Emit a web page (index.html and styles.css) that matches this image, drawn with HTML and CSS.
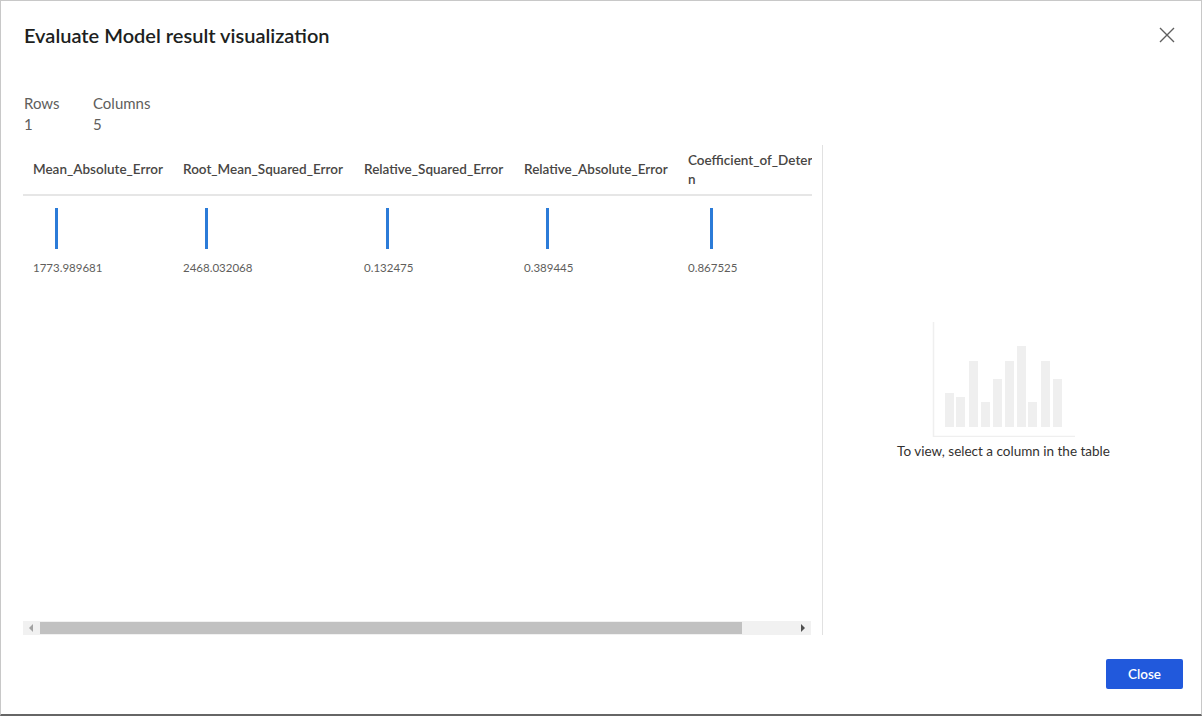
FILE: index.html
```html
<!DOCTYPE html>
<html lang="en">
<head>
<meta charset="utf-8">
<title>Evaluate Model result visualization</title>
<link rel="stylesheet" href="styles.css">
</head>
<body>
<div class="dialog">
  <div class="dlg-header">
    <h1 class="dlg-title">Evaluate Model result visualization</h1>
    <button class="icon-btn" aria-label="Close">
      <svg width="16" height="16" viewBox="0 0 16 16"><path d="M1 1L15 15M15 1L1 15" stroke="#5f5f5f" stroke-width="1.4" fill="none"/></svg>
    </button>
  </div>

  <div class="stats">
    <div class="stat stat-rows"><div class="stat-label">Rows</div><div class="stat-value">1</div></div>
    <div class="stat"><div class="stat-label">Columns</div><div class="stat-value">5</div></div>
  </div>

  <div class="main">
    <div class="table-area">
      <div class="table-clip">
        <table class="grid">
          <colgroup>
            <col class="c1"><col class="c2"><col class="c3"><col class="c4"><col class="c5">
          </colgroup>
          <thead>
            <tr>
              <th>Mean_Absolute_Error</th>
              <th>Root_Mean_Squared_Error</th>
              <th>Relative_Squared_Error</th>
              <th>Relative_Absolute_Error</th>
              <th class="narrow"><span class="wrapname">Coefficient_of_Determinatio<wbr>n</span></th>
            </tr>
          </thead>
          <tbody>
            <tr>
              <td><div class="spark"></div><div class="val">1773.989681</div></td>
              <td><div class="spark"></div><div class="val">2468.032068</div></td>
              <td><div class="spark"></div><div class="val">0.132475</div></td>
              <td><div class="spark"></div><div class="val">0.389445</div></td>
              <td><div class="spark"></div><div class="val">0.867525</div></td>
            </tr>
          </tbody>
        </table>
      </div>
      <div class="hscroll">
        <div class="arrow arrow-left"></div>
        <div class="thumb"></div>
        <div class="track-rest"></div>
        <div class="arrow arrow-right"></div>
      </div>
    </div>

    <div class="side">
      <div class="empty">
        <svg class="empty-chart" width="144" height="116" viewBox="0 0 144 116">
          <path d="M1.5 1V115.5H143" stroke="#efefef" stroke-width="1.5" fill="none"/>
          <g fill="#efefef">
            <rect x="13" y="72" width="9" height="34"/>
            <rect x="24" y="76" width="9" height="30"/>
            <rect x="37" y="40" width="9" height="66"/>
            <rect x="49" y="81" width="9" height="25"/>
            <rect x="61" y="58" width="9" height="48"/>
            <rect x="73" y="40" width="9" height="66"/>
            <rect x="85" y="25" width="9" height="81"/>
            <rect x="96" y="81" width="9" height="25"/>
            <rect x="109" y="40" width="9" height="66"/>
            <rect x="121" y="58" width="9" height="48"/>
          </g>
        </svg>
        <div class="empty-text">To view, select a column in the table</div>
      </div>
    </div>
  </div>

  <div class="footer">
    <button class="primary">Close</button>
  </div>
</div>
</body>
</html>
```

FILE: styles.css
```css
* { box-sizing: border-box; }
html, body { margin: 0; padding: 0; background: #ffffff; }
body {
  font-family: "Segoe UI", "Lato", "Noto Sans", "Liberation Sans", sans-serif;
  color: #323130;
}
.dialog {
  width: 1202px;
  height: 716px;
  background: #ffffff;
  border-top: 1px solid #c8c8c8;
  border-left: 1px solid #c8c8c8;
  border-right: 1px solid #c8c8c8;
  border-bottom: 2px solid #666666;
  display: flex;
  flex-direction: column;
  padding: 0 18px 0 22px;
}
.dlg-header {
  display: flex;
  justify-content: space-between;
  align-items: center;
  padding-top: 18px;
  height: 50px;
}
.dlg-title {
  margin: 0 0 0 1px;
  font-size: 20px;
  font-weight: 600;
  line-height: 28px;
  color: #201f1e;
}
.icon-btn {
  width: 32px;
  height: 32px;
  border: 0;
  background: transparent;
  padding: 0;
  display: flex;
  align-items: center;
  justify-content: center;
}
.stats {
  display: flex;
  margin-top: 42px;
  padding-left: 1px;
  font-size: 15px;
  line-height: 21px;
  color: #605e5c;
}
.stat-rows { width: 69px; }
.main {
  display: flex;
  margin-top: 10px;
  height: 490px;
}
.table-area {
  width: 789px;
  display: flex;
  flex-direction: column;
}
.table-clip {
  flex: 1;
  overflow: hidden;
}
.grid {
  border-collapse: collapse;
  table-layout: fixed;
  width: 845px;
}
.c1 { width: 150px; }
.c2 { width: 181px; }
.c3 { width: 160px; }
.c4 { width: 164px; }
.c5 { width: 190px; }
.grid th {
  height: 50px;
  padding: 0 10px;
  text-align: left;
  vertical-align: middle;
  font-size: 13.5px;
  font-weight: 600;
  line-height: 19px;
  color: #484644;
  border-bottom: 2px solid #e6e6e6;
  white-space: nowrap;
}
.grid th.narrow { white-space: normal; }
.wrapname { display: block; width: 120px; }
.grid td {
  padding: 12px 10px 0;
  vertical-align: top;
}
.spark {
  width: 3px;
  height: 41px;
  margin-left: 22px;
  background: #2b7bd8;
}
.val {
  margin-top: 11px;
  font-size: 11.5px;
  line-height: 16px;
  color: #605e5c;
}
.hscroll {
  height: 14px;
  display: flex;
  background: #f1f1f1;
  margin-right: 1px;
}
.arrow {
  width: 17px;
  height: 14px;
  position: relative;
}
.arrow-left::after, .arrow-right::after {
  content: "";
  position: absolute;
  top: 3px;
  width: 0;
  height: 0;
  border-top: 4px solid transparent;
  border-bottom: 4px solid transparent;
}
.arrow-left::after { left: 6px; border-right: 4px solid #a3a3a3; }
.arrow-right::after { left: 7px; border-left: 4px solid #505050; }
.thumb {
  width: 702px;
  height: 12px;
  margin-top: 1px;
  background: #c1c1c1;
}
.track-rest { flex: 1; }
.side {
  margin-left: 10px;
  flex: 1;
  border-left: 1px solid #e1e1e1;
  display: flex;
  align-items: center;
  justify-content: center;
}
.empty {
  display: flex;
  flex-direction: column;
  align-items: center;
  padding-left: 1px;
}
.empty-chart { display: block; }
.empty-text {
  margin-top: 6px;
  font-size: 13.5px;
  line-height: 16px;
  color: #323130;
}
.footer {
  display: flex;
  justify-content: flex-end;
  margin-top: 24px;
}
.primary {
  width: 77px;
  height: 30px;
  border: 0;
  border-radius: 2px;
  background: #2159dc;
  color: #ffffff;
  font-family: inherit;
  font-size: 13.5px;
  font-weight: 600;
  padding: 0;
}
```
